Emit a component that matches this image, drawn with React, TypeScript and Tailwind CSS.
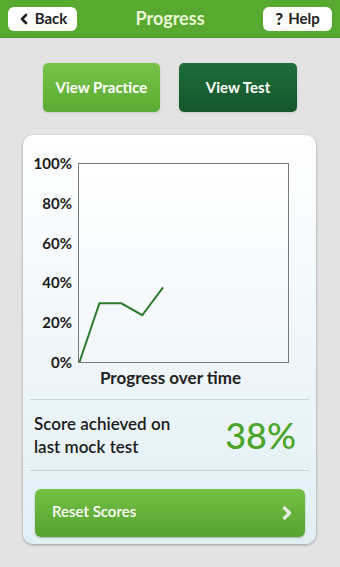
import { ChevronLeft, ChevronRight } from "lucide-react";

const labels = ["100%", "80%", "60%", "40%", "20%", "0%"];
const points = [
  [0, 0],
  [20, 59],
  [42, 59],
  [63, 47],
  [84, 75],
];

export default function App() {
  const line = points.map(([x, y]) => `${x},${199 - y}`).join(" ");

  return (
    <div className="w-[340px] h-[567px] bg-[#e3e3e3] font-['Lato','Noto_Sans',sans-serif] overflow-hidden">
      <header className="h-[38px] bg-[#58a92f] border-b border-[#4d9628] flex items-center justify-between px-[8px]">
        <button className="w-[69px] h-[24px] rounded-[6px] bg-white flex items-center justify-center gap-[3px] text-[15px] font-bold text-[#222]">
          <ChevronLeft size={16} strokeWidth={4} className="-ml-[2px]" />
          Back
        </button>
        <h1 className="text-[18px] font-bold text-[#eaf6d6]">Progress</h1>
        <button className="w-[69px] h-[24px] rounded-[6px] bg-white flex items-center justify-center gap-[5px] text-[15px] font-bold text-[#222]">
          <span className="text-[17px] font-black">?</span>
          Help
        </button>
      </header>

      <div className="flex justify-center gap-[19px] mt-[25px]">
        <button className="w-[117px] h-[49px] rounded-[5px] bg-gradient-to-b from-[#78c349] to-[#5aab33] text-white text-[15px] font-bold shadow-sm">
          View Practice
        </button>
        <button className="w-[118px] h-[49px] rounded-[5px] bg-gradient-to-b from-[#1f6d3a] to-[#14572c] text-white text-[15px] font-bold shadow-sm">
          View Test
        </button>
      </div>

      <div className="mt-[23px] ml-[23px] w-[293px] h-[409px] rounded-[10px] bg-gradient-to-b from-white to-[#e1eff5] shadow-[0_1px_3px_rgba(0,0,0,0.35)] px-[7px] flex flex-col">
        <div className="flex mt-[28px] gap-[6px] shrink-0">
          <div className="w-[42px] h-[217px] -mt-[9px] flex flex-col justify-between items-end text-[15px] font-bold text-[#1a1a1a] leading-[18px]">
            {labels.map((l) => (
              <span key={l}>{l}</span>
            ))}
          </div>
          <div className="w-[211px] h-[200px] border border-[#7a7a7a] bg-gradient-to-b from-white to-[#f1f7fa]">
            <svg width="209" height="198" viewBox="0 0 209 199" className="overflow-visible">
              <polyline points={line} fill="none" stroke="#2c7a2c" strokeWidth="2" strokeLinejoin="miter" />
            </svg>
          </div>
        </div>
        <p className="text-center text-[17px] leading-[20px] font-bold text-[#222] -mt-[3px] pl-[2px] shrink-0">Progress over time</p>

        <div className="border-t border-[#c7d3d8] mt-[11px] h-[71px] shrink-0 flex items-center justify-between pl-[4px] pr-[13px]">
          <p className="text-[17px] font-semibold text-[#1a1a1a] leading-[23px]">
            Score achieved on
            <br />
            last mock test
          </p>
          <span className="text-[36px] text-[#4aa52a] font-medium">38%</span>
        </div>
        <div className="border-t border-[#c7d3d8] shrink-0" />

        <button className="mt-[18px] ml-[5px] w-[270px] h-[48px] shrink-0 rounded-[6px] bg-gradient-to-b from-[#74bf45] to-[#55a42f] flex items-center justify-between pl-[17px] pr-[8px] pb-[3px] text-white text-[15px] font-semibold shadow-[0_1px_2px_rgba(0,0,0,0.25)]">
          Reset Scores
          <ChevronRight size={20} strokeWidth={4} className="text-[#e4ecdf] mt-[3px]" />
        </button>
      </div>
    </div>
  );
}
